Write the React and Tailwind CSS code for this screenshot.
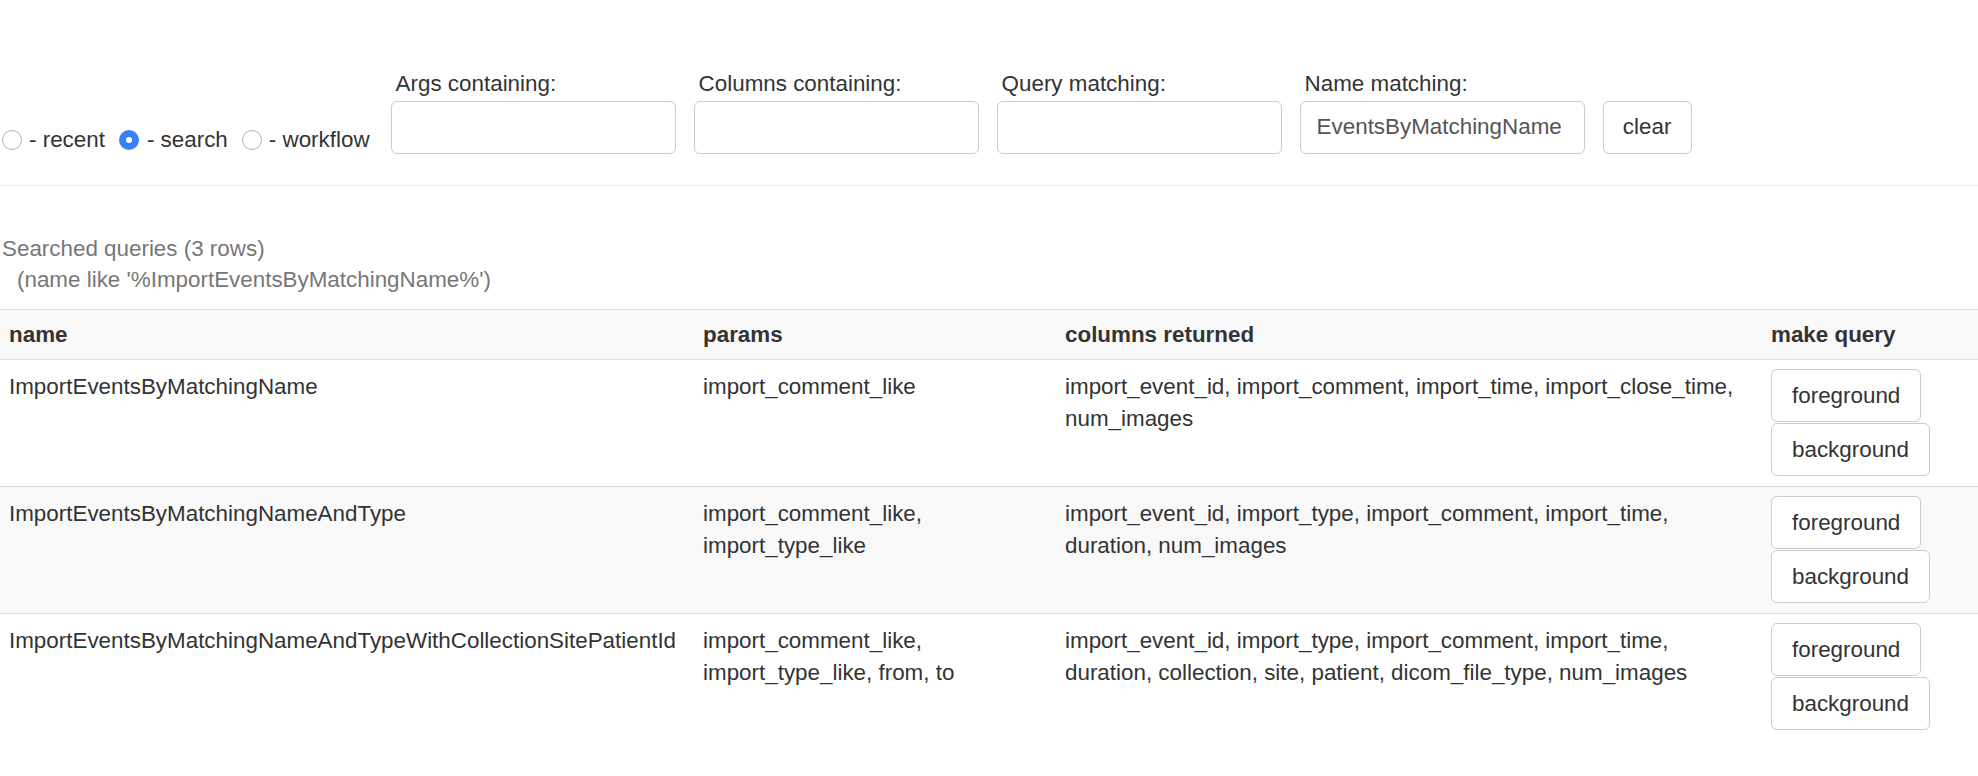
import React from "react";

function Radio({ checked, label, last }) {
  return (
    <div className={"flex items-center " + (last ? "" : "mr-[14px]")}>
      {checked ? (
        <span className="mt-[1px] mr-[8px] flex h-[20px] w-[20px] items-center justify-center rounded-full bg-[#3a80f6]">
          <span className="h-[6px] w-[6px] rounded-full bg-white" />
        </span>
      ) : (
        <span className="mt-[1px] mr-[7px] h-[20px] w-[20px] rounded-full border border-[#b4b4b4] bg-white" />
      )}
      <span>{label}</span>
    </div>
  );
}

function Filter({ label, value }) {
  return (
    <div className="flex flex-col">
      <label className="pl-[5px] mb-[1px] whitespace-nowrap">{label}</label>
      <input
        readOnly
        value={value || ""}
        className="h-[53px] w-[285px] rounded-[6px] border border-[#cccccc] bg-white pl-[16px] pr-[18px] text-[#555] outline-none"
      />
    </div>
  );
}

function Btn({ children }) {
  return (
    <button className="flex h-[53px] items-center rounded-[6px] border border-[#cccccc] bg-white px-[20px] text-[#333]">
      {children}
    </button>
  );
}

const rows = [
  {
    name: "ImportEventsByMatchingName",
    params: ["import_comment_like"],
    cols: ["import_event_id, import_comment, import_time, import_close_time,", "num_images"],
  },
  {
    name: "ImportEventsByMatchingNameAndType",
    params: ["import_comment_like,", "import_type_like"],
    cols: ["import_event_id, import_type, import_comment, import_time,", "duration, num_images"],
  },
  {
    name: "ImportEventsByMatchingNameAndTypeWithCollectionSitePatientId",
    params: ["import_comment_like,", "import_type_like, from, to"],
    cols: [
      "import_event_id, import_type, import_comment, import_time,",
      "duration, collection, site, patient, dicom_file_type, num_images",
    ],
  },
];

export default function App() {
  return (
    <div className="h-[776px] w-[1978px] overflow-hidden bg-white font-['Liberation_Sans',Arial,sans-serif] text-[22.4px] leading-[31.5px] text-[#333]">
      <div className="flex items-end gap-[18px] pt-[68px]">
        <div className="mb-[-2px] mr-[3px] flex items-center pl-[2px] whitespace-nowrap">
          <Radio label="- recent" />
          <Radio label="- search" checked />
          <Radio label="- workflow" last />
        </div>
        <Filter label="Args containing:" />
        <Filter label="Columns containing:" />
        <Filter label="Query matching:" />
        <Filter label="Name matching:" value="EventsByMatchingName" />
        <button className="h-[53px] w-[89px] rounded-[6px] border border-[#cccccc] bg-white text-[#333]">
          clear
        </button>
      </div>

      <div className="mt-[31px] border-t border-[#eeeeee]" />

      <div className="mt-[47px] text-[#777]">
        <div className="pl-[2px]">Searched queries (3 rows)</div>
        <div className="pl-[17px]">(name like '%ImportEventsByMatchingName%')</div>
      </div>

      <table className="mt-[13px] w-[1978px] table-fixed border-collapse">
        <colgroup>
          <col className="w-[694px]" />
          <col className="w-[362px]" />
          <col className="w-[706px]" />
          <col className="w-[216px]" />
        </colgroup>
        <thead>
          <tr className="border-t border-[#dddddd] bg-[#f9f9f9]">
            <th className="px-[9px] py-[9px] text-left font-bold">name</th>
            <th className="px-[9px] py-[9px] text-left font-bold">params</th>
            <th className="px-[9px] py-[9px] text-left font-bold">columns returned</th>
            <th className="px-[9px] py-[9px] text-left font-bold whitespace-nowrap">make query</th>
          </tr>
        </thead>
        <tbody>
          {rows.map((r, i) => (
            <tr key={r.name} className={"border-t border-[#dddddd] " + (i === 1 ? "bg-[#f9f9f9]" : "bg-white")}>
              <td className="px-[9px] pt-[11px] pb-[10px] align-top whitespace-nowrap">{r.name}</td>
              <td className="px-[9px] pt-[11px] pb-[10px] align-top">
                {r.params.map((p) => (
                  <div key={p} className="whitespace-nowrap">{p}</div>
                ))}
              </td>
              <td className="px-[9px] pt-[11px] pb-[10px] align-top">
                {r.cols.map((c) => (
                  <div key={c} className="whitespace-nowrap">{c}</div>
                ))}
              </td>
              <td className="px-[9px] pt-[9px] pb-[10px] align-top">
                <div className="flex flex-col items-start gap-[1px]">
                  <Btn>foreground</Btn>
                  <Btn>background</Btn>
                </div>
              </td>
            </tr>
          ))}
        </tbody>
      </table>
    </div>
  );
}
